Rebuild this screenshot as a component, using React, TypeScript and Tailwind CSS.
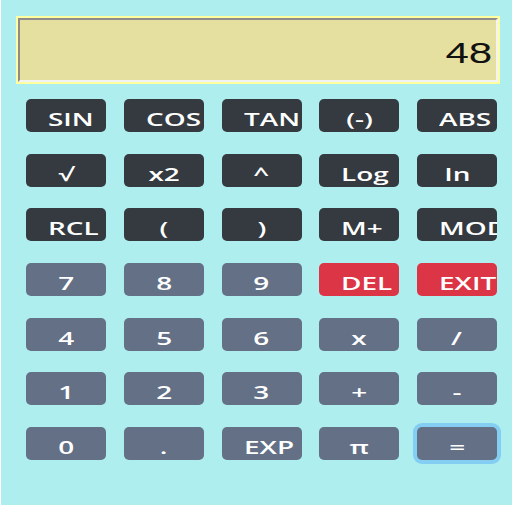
const DARK = "bg-[#343a40]";
const GRAY = "bg-[#637086]";
const RED = "bg-[#dc3545]";

type Key = { label: string; color: string; wide?: boolean; focus?: boolean };

const keys: Key[] = [
  { label: "SIN", color: DARK, wide: true },
  { label: "COS", color: DARK, wide: true },
  { label: "TAN", color: DARK, wide: true },
  { label: "(-)", color: DARK },
  { label: "ABS", color: DARK, wide: true },
  { label: "√", color: DARK },
  { label: "x2", color: DARK },
  { label: "^", color: DARK },
  { label: "Log", color: DARK, wide: true },
  { label: "In", color: DARK },
  { label: "RCL", color: DARK, wide: true },
  { label: "(", color: DARK },
  { label: ")", color: DARK },
  { label: "M+", color: DARK, wide: true },
  { label: "MOD", color: DARK, wide: true },
  { label: "7", color: GRAY },
  { label: "8", color: GRAY },
  { label: "9", color: GRAY },
  { label: "DEL", color: RED, wide: true },
  { label: "EXIT", color: RED, wide: true },
  { label: "4", color: GRAY },
  { label: "5", color: GRAY },
  { label: "6", color: GRAY },
  { label: "x", color: GRAY },
  { label: "/", color: GRAY },
  { label: "1", color: GRAY },
  { label: "2", color: GRAY },
  { label: "3", color: GRAY },
  { label: "+", color: GRAY },
  { label: "-", color: GRAY },
  { label: "0", color: GRAY },
  { label: ".", color: GRAY },
  { label: "EXP", color: GRAY, wide: true },
  { label: "π", color: GRAY },
  { label: "=", color: GRAY, focus: true },
];

function CalcKey({ k }: { k: Key }) {
  return (
    <button
      className={`${k.color} h-[33px] rounded-[5px] overflow-hidden flex items-start pt-[11px] px-[22px] text-white ${
        k.wide ? "justify-start" : "justify-center"
      } ${k.focus ? "ring-[4px] ring-[#84cdf3]" : ""}`}
    >
      <span
        className={`inline-block whitespace-nowrap leading-none text-[18px] font-semibold scale-x-[1.55] ${
          k.wide ? "origin-left" : "origin-center"
        }`}
      >
        {k.label}
      </span>
    </button>
  );
}

export default function App() {
  return (
    <div className="min-h-screen bg-white" style={{ fontFamily: '"Open Sans", sans-serif' }}>
      <div className="ml-px h-[505px] bg-[#afeeee] pt-4">
        <div className="ml-[15px] w-[484px] h-[68px] border-2 border-[#ffffa0]">
          <div className="h-full border-2 border-t-[#8c8c8c] border-l-[#8c8c8c] border-b-[#f3f3f3] border-r-[#f3f3f3] bg-[#e6e0a0] flex items-center justify-end pr-[4px] pt-[7px]">
            <span
              className="inline-block leading-none text-[29px] text-[#111] scale-x-[1.45] origin-right"
              style={{ fontFamily: '"Liberation Sans", Arial, sans-serif' }}
            >
              48
            </span>
          </div>
        </div>
        <div className="mt-[15px] ml-[25px] grid grid-cols-[repeat(5,80px)] gap-x-[17.75px] gap-y-[21.67px]">
          {keys.map((k) => (
            <CalcKey key={k.label} k={k} />
          ))}
        </div>
      </div>
    </div>
  );
}
